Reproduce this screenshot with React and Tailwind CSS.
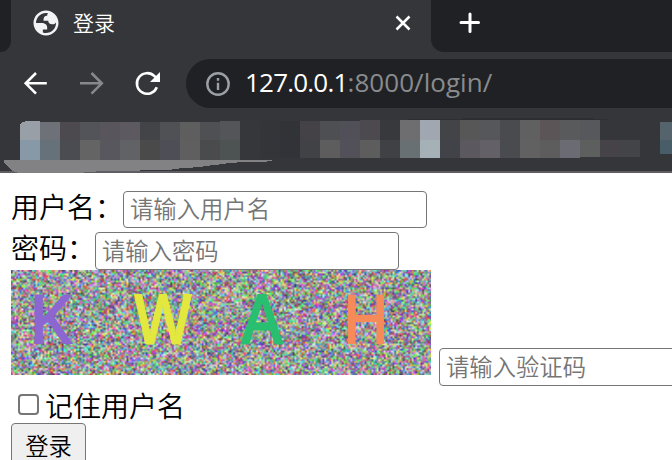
import { useLayoutEffect, useRef } from 'react';

const UPPER = ['#989fa7', '#6f7179', '#4d4a4f', '#53545a', '#58565c', '#5c5a60', '#434447', '#505155', '#5e5e5e', '#4f5053', '#545558', '#36373b', '#343538', '#323337', '#444247', '#4e4f52', '#514f57', '#4c4a4f', '#38393c', '#6e6d6f', '#a1a7b0', '#434447', '#575757', '#56575b', '#4a4b4e', '#606061', '#5c5557', '#595a5b', '#57585c'];
const LOWER = ['#8798a7', '#67717a', '#4b4c52', '#646464', '#58575d', '#616266', '#4a4a4a', '#4e4f56', '#5f5f5f', '#494b4d', '#4d5253', '#36373b', '#343538', '#323338', '#414246', '#5d5d5d', '#525058', '#5d5d5d', '#404145', '#687074', '#a6b0b7', '#424348', '#5b595f', '#636167', '#4a4b4e', '#616161', '#5d5d5d', '#6b6c73', '#5d5e5e', '#454347', '#434447'];

function Mosaic() {
  return (
    <svg width="672" height="66" viewBox="0 110 672 66" shapeRendering="crispEdges" className="block shrink-0">
      <rect y="171" width="672" height="2" fill="#5f5c62" />
      <rect y="173" width="672" height="3" fill="#fff" />
      {UPPER.map((c, i) => {
        const top = i > 16 ? 120 : i === 0 || (i > 9 && i < 17) ? 121 : 122;
        return <rect key={i} x={20 + i * 20} y={top} width="20" height={140 - top} fill={c} />;
      })}
      {LOWER.map((c, i) => (
        <rect key={i} x={20 + i * 20} y="140" width="20" height={i < 12 ? 20 : i > 27 ? 17 : 18} fill={c} />
      ))}
      <path d="M20 121h8l-6 1l-2 3z" fill="#35363a" />
      <path d="M462 118h132v1h13v1H407v-1h55z" fill="#2d2e31" />
      <rect x="660" y="122" width="12" height="18" fill="#54636c" />
      <rect x="660" y="140" width="12" height="14" fill="#495d69" />
      <path d="M4 160H272V161H267V162H237V163H226V164H219V165H210V166H203V167H193V168H179V169H172V170H140V171H96V172H84V173H18L12 171L6 165L4 162Z" fill="#828183" />
    </svg>
  );
}

function Captcha() {
  const ref = useRef(null);
  useLayoutEffect(() => {
    const ctx = ref.current.getContext('2d');
    const img = ctx.createImageData(240, 60);
    let seed = 20417;
    const next = () => {
      seed = (Math.imul(seed, 1664525) + 1013904223) >>> 0;
      return seed >>> 24;
    };
    for (let i = 0; i < img.data.length; i += 4) {
      img.data[i] = 50 + next() * 0.804;
      img.data[i + 1] = 50 + next() * 0.804;
      img.data[i + 2] = 50 + next() * 0.804;
      img.data[i + 3] = 255;
    }
    ctx.putImageData(img, 0, 0);
  }, []);
  return (
    <div className="relative h-[105px] w-[420px] shrink-0">
      <canvas ref={ref} width="240" height="60" className="block h-full w-full" />
      <svg className="absolute inset-0 font-['Open_Sans',sans-serif]" width="420" height="105" fontSize="68" fontWeight="600">
        <text x="17" y="74" fill="#8c67d2" textLength="45" lengthAdjust="spacingAndGlyphs">K</text>
        <text x="123" y="74" fill="#e3e83f" stroke="#e3e83f" textLength="58" lengthAdjust="spacingAndGlyphs">W</text>
        <text x="230" y="74" fill="#29bf70" stroke="#29bf70" textLength="42" lengthAdjust="spacingAndGlyphs">A</text>
        <text x="331" y="74" fill="#f68b59" textLength="48" lengthAdjust="spacingAndGlyphs">H</text>
      </svg>
    </div>
  );
}

const FIELD = "block shrink-0 rounded-[4px] border border-[#767676] bg-white px-[6px] pb-[3px] text-[23.33px] leading-[34px] text-black placeholder:text-[#757575] placeholder:opacity-100";

export default function App() {
  return (
    <div className="h-[460px] w-[672px] overflow-hidden bg-white font-['Noto_Sans_CJK_SC',sans-serif] text-black">
      <header className="bg-[#35363a]">
        <div className="flex h-[52px]">
          <div className="w-[11px] shrink-0 rounded-br-[12px] bg-[#202124]" />
          <div className="flex w-[420px] shrink-0 items-start">
            <svg className="mt-[8px] ml-[20px] shrink-0" width="30" height="30" viewBox="0 0 24 24" fill="#f1f3f4">
              <path fillRule="evenodd" d="M12 2C6.48 2 2 6.48 2 12s4.48 10 10 10 10-4.48 10-10S17.52 2 12 2zM4 12h4.4c3.407.022 4.922 1.73 4.543 5.127H9.488v2.47a8.004 8.004 0 0 0 10.498-8.083C19.327 12.504 18.332 13 17 13c-2.137 0-3.206-.916-3.206-2.75h-3.748c-.274-2.728.683-4.092 2.87-4.092 0-.975.327-1.597.811-1.97A8.004 8.004 0 0 0 4 12z" />
            </svg>
            <span className="mt-[5px] ml-[12px] grow text-[21px] leading-[34px] font-[350] text-white">登录</span>
            <svg className="mt-[14px] mr-[19px] shrink-0" width="18" height="18" viewBox="0 0 18 18" fill="none" stroke="#fff" strokeWidth="2.5">
              <path d="M2.5 2.5L15.5 15.5M15.5 2.5L2.5 15.5" />
            </svg>
          </div>
          <div className="grow rounded-bl-[13px] bg-[#202124] pt-[11px] pl-[27px]">
            <svg width="24" height="24" viewBox="0 0 24 24" stroke="#fff" strokeWidth="3" strokeLinecap="round">
              <path d="M12 3V20.5M3 11.5H20.5" />
            </svg>
          </div>
        </div>
        <div className="flex h-[58px] pt-[7px]">
          <svg className="shrink-0" width="186" height="49" viewBox="0 59 186 49" fill="none" strokeWidth="2.6">
            <path d="M46.8 83.3H26M36 73L25.7 83.3L36 93.7" stroke="#fff" />
            <path d="M80 83.3H101M91.5 73L101.8 83.3L91.5 93.7" stroke="#87888b" />
            <path d="M156.8 87.2A10.3 10.3 0 1 1 154.5 76.2L156.5 78.2" stroke="#fff" />
            <path d="M160 72V82H150Z" fill="#fff" />
          </svg>
          <div className="flex h-[49px] grow items-center rounded-l-full bg-[#202124] pl-[20px]">
            <svg width="24" height="24" viewBox="0 0 24 24" fill="none" stroke="#9aa0a6" strokeWidth="2.4">
              <circle cx="12" cy="12" r="10.7" />
              <path d="M12 10.7V18M12 6V8.7" />
            </svg>
            <span className="-mt-[3px] ml-[15px] font-['Open_Sans',sans-serif] text-[26px] leading-[40px] tracking-[0.05px] whitespace-nowrap text-[#898b8e]">
              <span className="tracking-[-0.8px] text-white">127.0.0.1</span>:8000/login/
            </span>
          </div>
        </div>
        <Mosaic />
      </header>
      <form className="pt-[15px] pl-[11px]">
        <div className="flex h-[41px]">
          <label className="-mt-[3px] w-[112px] shrink-0 text-[28px] leading-[37px] font-[350] whitespace-nowrap">用户名：</label>
          <input className={FIELD + " h-[37px] w-[304px] font-[350]"} placeholder="请输入用户名" />
        </div>
        <div className="flex h-[38px]">
          <label className="-mt-[3px] w-[84px] shrink-0 text-[28px] leading-[37px] font-[350] whitespace-nowrap">密码：</label>
          <input className={FIELD + " h-[38px] w-[304px] font-[350]"} placeholder="请输入密码" />
        </div>
        <div className="flex h-[116px] items-start">
          <Captcha />
          <input className={FIELD + " mt-[78px] ml-[8px] h-[38px] w-[304px] font-[350]"} placeholder="请输入验证码" />
        </div>
        <div className="flex h-[37px] items-start">
          <input type="checkbox" className="mt-[8px] ml-[7px] h-[21px] w-[21px] shrink-0 appearance-none rounded-[4px] border-2 border-[#767676] bg-white" />
          <label className="ml-[6px] text-[28px] leading-[38px] font-[350]">记住用户名</label>
        </div>
        <button type="button" className="block h-[44px] w-[75px] rounded-[4px] border border-[#767676] bg-[#efefef] text-center text-[23.33px] leading-[40px] font-[350]">登录</button>
      </form>
    </div>
  );
}
